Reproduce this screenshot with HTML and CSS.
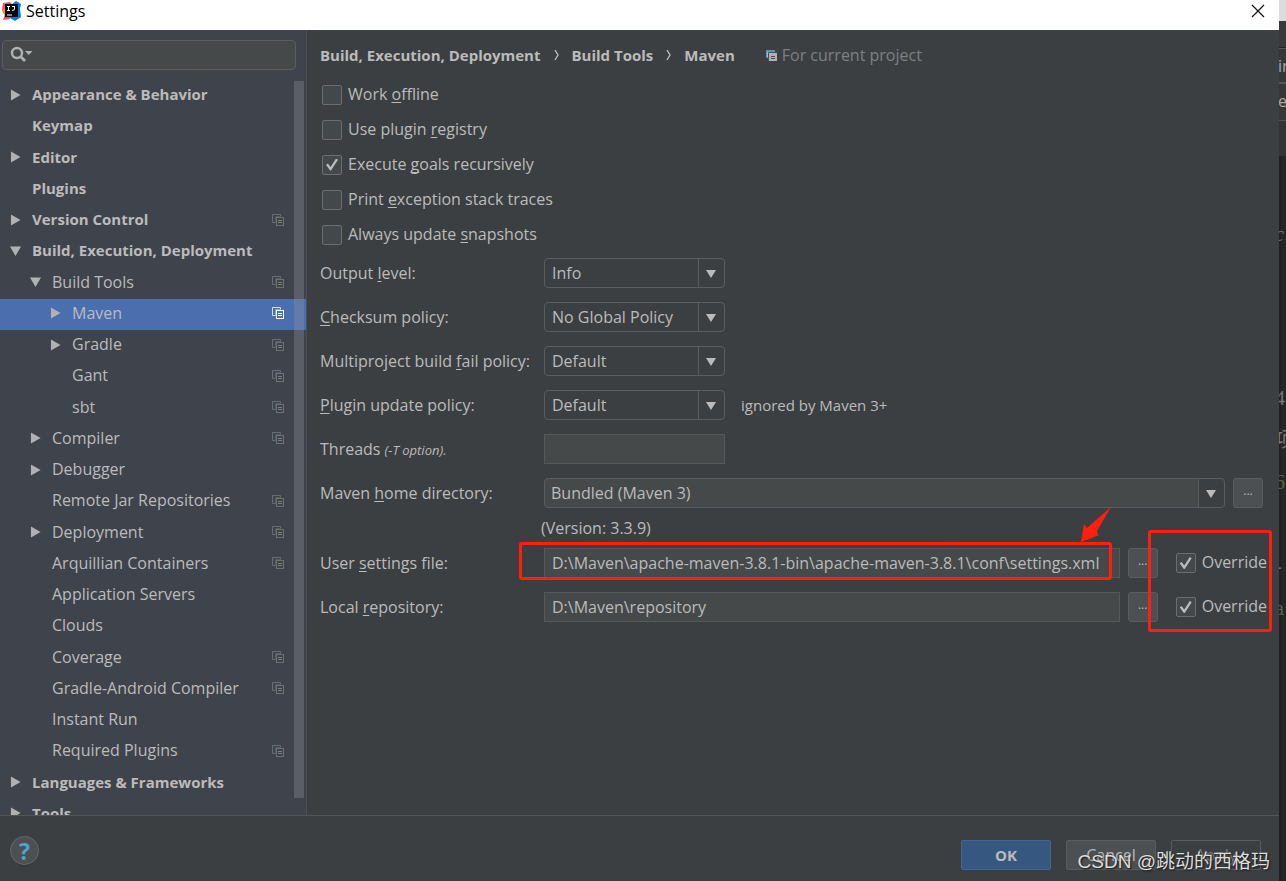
FILE: index.html
```html
<!DOCTYPE html>
<html lang="en">
<head>
<meta charset="utf-8">
<title>Settings</title>
<link rel="stylesheet" href="styles.css">
</head>
<body>
<svg class="defs" width="0" height="0" aria-hidden="true">
  <symbol id="right" viewBox="0 0 12 12"><path d="M1 0L11.500 6L1 12Z" fill="currentColor"/></symbol>
  <symbol id="down" viewBox="0 0 12 12"><path d="M0 1H12L6 11.500Z" fill="currentColor"/></symbol>
  <symbol id="pick" viewBox="0 0 10 8"><path d="M0 0H10L5 8Z" fill="currentColor"/></symbol>
  <symbol id="copy" viewBox="0 0 12 12"><path d="M3 8.500H.5V.5H8.500V2" fill="none" stroke="#626e79"/><path d="M3.500 9V2.500H9" fill="none" stroke="#565b60"/><rect x="4.500" y="3.500" width="7" height="8" fill="none" stroke="#6d7174"/><path d="M6 6.500h4M6 8.500h4" stroke="#7a7e81"/></symbol>
  <symbol id="copy-on" viewBox="0 0 12 12"><path d="M3 8.500H.5V.5H8.500V2" fill="none" stroke="#c9e4ff"/><rect x="4.500" y="3.500" width="7" height="8" fill="none" stroke="#fff"/><path d="M3.500 9V2.500H9" fill="none" stroke="#8fa9d6"/><path d="M6 6.500h4M6 8.500h4" stroke="#fff"/></symbol>
</svg>
<div class="desktop">
<div class="dialog">
  <header class="titlebar">
    <svg class="logo" width="19" height="20" viewBox="0 0 19 20"><path d="M1 2L8 1L11 4L8 18L1 19L3 13L0 9Z" fill="#f0506a"/><path d="M0 9L4 7V15L1 12Z" fill="#f58a3c"/><path d="M10 3L14 0L19 3L18 8L19 16L13 20L8 17Z" fill="#0a78dc"/><rect x="3" y="3" width="13" height="13" fill="#0b0b0f"/><path d="M5 5.500h3M6.500 5.500v4M5 9.500h3M10 5.500h3M12.500 5v3q0 1.500-2.500 1.500M5 14h5" fill="none" stroke="#fff"/></svg>
    <h1>Settings</h1>
    <button class="close" aria-label="Close"><svg width="14" height="14" viewBox="0 0 14 14"><path d="M1 1L13 13M13 1L1 13" stroke="#111" stroke-width="1.200"/></svg></button>
  </header>
  <div class="content">
    <aside class="sidebar">
      <label class="search" aria-label="Search settings">
        <svg width="24" height="18" viewBox="0 0 24 18"><circle cx="7" cy="7" r="5" fill="none" stroke="#afb1b3" stroke-width="2.400"/><path d="M10.500 10.500L15 15" stroke="#afb1b3" stroke-width="2.800"/><path d="M15 5H22.500L18.700 9Z" fill="#afb1b3"/></svg>
        <input type="text">
      </label>
      <div class="tree-view">
      <ul class="tree">
        <li class="top"><svg class="arrow"><use href="#right"/></svg><span>Appearance &amp; Behavior</span></li>
        <li class="top"><i class="arrow"></i><span>Keymap</span></li>
        <li class="top"><svg class="arrow"><use href="#right"/></svg><span>Editor</span></li>
        <li class="top"><i class="arrow"></i><span>Plugins</span></li>
        <li class="top"><svg class="arrow"><use href="#right"/></svg><span>Version Control</span><svg class="copy"><use href="#copy"/></svg></li>
        <li class="top"><svg class="arrow"><use href="#down"/></svg><span>Build, Execution, Deployment</span></li>
        <li class="sub"><svg class="arrow"><use href="#down"/></svg><span>Build Tools</span><svg class="copy"><use href="#copy"/></svg></li>
        <li class="leaf selected"><svg class="arrow"><use href="#right"/></svg><span>Maven</span><svg class="copy"><use href="#copy-on"/></svg></li>
        <li class="leaf"><svg class="arrow"><use href="#right"/></svg><span>Gradle</span><svg class="copy"><use href="#copy"/></svg></li>
        <li class="leaf"><i class="arrow"></i><span>Gant</span><svg class="copy"><use href="#copy"/></svg></li>
        <li class="leaf"><i class="arrow"></i><span>sbt</span><svg class="copy"><use href="#copy"/></svg></li>
        <li class="sub"><svg class="arrow"><use href="#right"/></svg><span>Compiler</span><svg class="copy"><use href="#copy"/></svg></li>
        <li class="sub"><svg class="arrow"><use href="#right"/></svg><span>Debugger</span></li>
        <li class="sub"><i class="arrow"></i><span>Remote Jar Repositories</span><svg class="copy"><use href="#copy"/></svg></li>
        <li class="sub"><svg class="arrow"><use href="#right"/></svg><span>Deployment</span><svg class="copy"><use href="#copy"/></svg></li>
        <li class="sub"><i class="arrow"></i><span>Arquillian Containers</span><svg class="copy"><use href="#copy"/></svg></li>
        <li class="sub"><i class="arrow"></i><span>Application Servers</span></li>
        <li class="sub"><i class="arrow"></i><span>Clouds</span></li>
        <li class="sub"><i class="arrow"></i><span>Coverage</span><svg class="copy"><use href="#copy"/></svg></li>
        <li class="sub"><i class="arrow"></i><span>Gradle-Android Compiler</span><svg class="copy"><use href="#copy"/></svg></li>
        <li class="sub"><i class="arrow"></i><span>Instant Run</span></li>
        <li class="sub"><i class="arrow"></i><span>Required Plugins</span><svg class="copy"><use href="#copy"/></svg></li>
        <li class="top"><svg class="arrow"><use href="#right"/></svg><span>Languages &amp; Frameworks</span></li>
        <li class="top"><svg class="arrow"><use href="#right"/></svg><span>Tools</span></li>
      </ul>
      <div class="thumb"></div>
      </div>
    </aside>
    <main class="main">
      <nav class="crumbs">
        <b>Build, Execution, Deployment</b><svg width="5" height="12" viewBox="0 0 5 12"><path d="M1 1L4 6L1 11" fill="none" stroke="#bbb" stroke-width="1.400"/></svg><b>Build Tools</b><svg width="5" height="12" viewBox="0 0 5 12"><path d="M1 1L4 6L1 11" fill="none" stroke="#bbb" stroke-width="1.400"/></svg><b>Maven</b>
        <span class="scope"><svg width="11" height="11" viewBox="0 0 11 11"><path d="M0 0H9V2H3V8H0Z" fill="#5e94b5"/><path d="M1 2H8V7H1Z" fill="#aeb9c0"/><path d="M3 3H11V11H3Z" fill="#afb1b3"/><path d="M2.500 11V2.500H11" fill="none" stroke="#4a5155"/><path d="M5 6.500h4M5 8.500h4" stroke="#4a4d4f"/></svg>For current project</span>
      </nav>
      <div class="checks">
        <label class="check"><input type="checkbox"><span>Work <u>o</u>ffline</span></label>
        <label class="check"><input type="checkbox"><span>Use plugin <u>r</u>egistry</span></label>
        <label class="check"><input type="checkbox" checked><span>Execute <u>g</u>oals recursively</span></label>
        <label class="check"><input type="checkbox"><span>Print <u>e</u>xception stack traces</span></label>
        <label class="check"><input type="checkbox"><span>Always update <u>s</u>napshots</span></label>
      </div>
      <form class="form">
        <div class="row"><label for="level">Output <u>l</u>evel:</label><div class="combo"><select id="level"><option>Info</option></select><svg class="pick"><use href="#pick"/></svg></div></div>
        <div class="row"><label for="sum"><u>C</u>hecksum policy:</label><div class="combo"><select id="sum"><option>No Global Policy</option></select><svg class="pick"><use href="#pick"/></svg></div></div>
        <div class="row"><label for="fail">Multiproject build <u>f</u>ail policy:</label><div class="combo"><select id="fail"><option>Default</option></select><svg class="pick"><use href="#pick"/></svg></div></div>
        <div class="row"><label for="upd"><u>P</u>lugin update policy:</label><div class="combo"><select id="upd"><option>Default</option></select><svg class="pick"><use href="#pick"/></svg></div><span class="note">ignored by Maven 3+</span></div>
        <div class="row"><label for="threads">Threads <i>(-T option).</i></label><input class="text short" id="threads" type="text"></div>
        <div class="row home"><label for="home">Maven <u>h</u>ome directory:</label><div class="combo wide"><select id="home"><option>Bundled (Maven 3)</option></select><svg class="pick"><use href="#pick"/></svg></div><button type="button" class="more" aria-label="Browse home">...</button></div>
        <p class="version">(Version: 3.3.9)</p>
        <div class="row marked"><label for="user">User <u>s</u>ettings file:</label><input class="text" id="user" type="text" value="D:\Maven\apache-maven-3.8.1-bin\apache-maven-3.8.1\conf\settings.xml"><button type="button" class="more" aria-label="Browse settings">...</button><label class="check override"><input type="checkbox" checked><span>Override</span></label>
          <div class="mark file"></div><div class="mark toggles"></div>
          <svg class="pointer" width="32" height="36" viewBox="0 0 32 36"><path d="M31 0L17 24L18 27L19 28L1 35L4 17L7 21Z" fill="#ff1f0f"/></svg>
        </div>
        <div class="row"><label for="repo">Local <u>r</u>epository:</label><input class="text" id="repo" type="text" value="D:\Maven\repository"><button type="button" class="more" aria-label="Browse repository">...</button><label class="check override"><input type="checkbox" checked><span>Override</span></label></div>
      </form>
    </main>
  </div>
  <footer class="footer">
    <button class="help">?</button>
    <button class="btn ok">OK</button>
    <button class="btn">Cancel</button>
    <button class="btn apply" disabled>Apply</button>
  </footer>
</div>
<div class="editor" aria-hidden="true">
  <div class="sky"></div><div class="menu"></div><div class="tab">in</div><div class="tab file-tab">e</div><div class="bar"></div>
  <div class="code ital">c</div><div class="gap"></div><div class="code">4</div><div class="code">项</div><div class="code green">6</div><div class="code"></div><div class="code">-</div><div class="code green">a</div>
</div>
<div class="watermark">CSDN @跳动的西格玛</div>
</div>
</body>
</html>
```
FILE: styles.css
```css
* { box-sizing: border-box; }
body { margin: 0; background: #262626; color: #bbb; font: 16px/20px "Open Sans", "Noto Sans", sans-serif; }
button, input, select { font: inherit; color: inherit; }
h1, p, ul { margin: 0; padding: 0; }
.defs { position: absolute; }
.desktop { position: relative; display: flex; height: 100vh; overflow: hidden; }
.dialog { flex: 1; min-width: 0; display: flex; flex-direction: column; background: #3c3f41; }

.titlebar { display: flex; align-items: center; height: 30px; padding: 0 14px 8px 2px; gap: 5px; background: #fff; color: #000; flex: none; }
.titlebar h1 { flex: 1; font-size: 16px; font-weight: 400; }
.close { display: flex; padding: 0; border: 0; background: none; }

.content { flex: 1; min-height: 0; display: flex; border-bottom: 1px solid #515658; }
.sidebar { width: 307px; flex: none; display: flex; flex-direction: column; background: #3f434c; border-right: 1px solid #4d5052; }
.search { display: flex; align-items: center; height: 30px; margin: 10px 10px 10px 2px; padding-left: 7px; border: 1px solid #5a5e5f; border-radius: 4px; background: #45494a; }
.search input { flex: 1; min-width: 0; border: 0; background: none; outline: 0; }
.tree-view { position: relative; flex: 1; min-height: 0; overflow: hidden; }
.tree { display: grid; grid-auto-rows: 1fr; height: 750px; list-style: none; }
.tree li { display: flex; align-items: center; gap: 11px; padding: 0 22px 2px 10px; }
.tree .top, .crumbs b { font-size: 15px; font-weight: 700; }
.tree .sub { padding-left: 30px; }
.tree .leaf { padding-left: 50px; }
.tree span { flex: 1; padding-bottom: 1px; }
.tree .selected { background: #4b6eaf; }
.arrow { width: 11px; height: 12px; flex: none; color: #afb1b3; }
.copy { width: 12px; height: 12px; flex: none; }
.thumb { position: absolute; top: 1px; right: 2px; bottom: 17px; width: 10px; background: rgba(150, 152, 160, .32); }

.main { flex: 1; min-width: 0; padding: 15px 12px 0 13px; }
.crumbs { display: flex; align-items: center; gap: 13px; height: 20px; }
.scope { display: flex; align-items: center; gap: 5px; margin-left: 18px; color: #7d8082; }
.checks { margin: 12px 0 0 2px; }
.check { display: flex; align-items: center; gap: 6px; height: 35px; white-space: nowrap; }
.check span { padding-bottom: 2px; }
.check input { appearance: none; width: 20px; height: 20px; margin: 0; border: 1px solid #6b6e70; border-radius: 2px; background: #43494a; display: grid; place-items: center; }
.check input:checked::after { content: ""; width: 12px; height: 12px; background: #bbb; clip-path: polygon(0 52%, 16% 42%, 38% 70%, 84% 0, 100% 10%, 42% 100%, 34% 100%); }
u { text-decoration: underline; text-decoration-skip-ink: none; text-underline-offset: 2px; }

.form { display: flex; flex-direction: column; gap: 14px; margin-top: 6px; }
.row { display: flex; align-items: center; height: 30px; }
.row > label:first-child { width: 224px; flex: none; white-space: nowrap; }
.row i { font-size: 13px; }
.combo { position: relative; width: 181px; height: 30px; }
.combo select { appearance: none; width: 100%; height: 100%; padding: 0 34px 0 7px; border: 1px solid #5a5d5e; border-radius: 4px; background: linear-gradient(#5a5d5e, #5a5d5e) right 25px top / 1px 100% no-repeat; outline: 0; }
.pick { position: absolute; right: 9px; top: 12px; width: 10px; height: 8px; color: #bbb; pointer-events: none; }
.combo.wide { flex: 1; }
.combo.wide select { padding-left: 6px; background-image: linear-gradient(90deg, #5a5d5e 1px, #3c3f41 1px), linear-gradient(#45494a, #45494a); background-size: 26px 100%, 100% 100%; background-position: right top; }
.note { margin-left: 16px; font-size: 15px; }
.text { flex: 1; min-width: 0; height: 30px; padding: 0 7px; border: 1px solid #56595a; background: #45494a; outline: 0; }
.text.short { flex: none; width: 181px; }
.more { width: 30px; height: 30px; margin-left: 8px; padding: 0 0 5px; border: 1px solid #595d5f; border-radius: 3px; background: #4c5052; font-size: 12px; line-height: 20px; }
.home { padding-right: 4px; }
.version { margin: -7px 0 -7px 221px; height: 26px; line-height: 26px; }
.override { margin-left: 18px; }
.marked { position: relative; }
.mark { position: absolute; border: 3px solid #ff1f0f; border-radius: 3px; pointer-events: none; }
.file { left: 199px; right: 155px; top: -6px; height: 38px; }
.toggles { width: 124px; right: -5px; top: -18px; height: 102px; }
.pointer { position: absolute; right: 155px; top: -41px; }

.footer { display: flex; align-items: center; gap: 15px; height: 65px; padding: 0 18px 0 10px; flex: none; }
.help { width: 29px; height: 29px; margin: 4px auto 0 0; padding: 0; border: 1px solid #66696b; border-radius: 50%; background: #4c5052; color: #52a1cf; font-size: 23px; font-weight: 700; line-height: 26px; box-shadow: 0 7px 0 -5px #35383a; }
.btn { width: 90px; height: 30px; margin-top: 12px; padding: 0; border: 1px solid #585c5e; border-radius: 2px; background: #4c5052; }
.btn.ok { border-color: #43688f; background: #365880; font-size: 15px; font-weight: 700; }
.btn.apply { background: none; color: #777; }

.editor { width: 7px; flex: none; overflow: hidden; background: #262626; box-shadow: inset 2px 0 2px #202020; color: #777; line-height: 35px; }
.sky { height: 21px; background: #dcdcdc; }
.menu { height: 27px; background: #393939; border-bottom: 1px solid #222; }
.tab { height: 35px; background: #373737; border-bottom: 1px solid #555; border-top: 1px solid #555; color: #aaa; text-indent: -1px; }
.file-tab { height: 38px; }
.bar { height: 35px; background: #343434; }
.code { height: 42px; font-size: 20px; line-height: 42px; text-indent: -4px; font-family: "Liberation Serif", "Noto Sans CJK SC", serif; }
.ital { height: 156px; line-height: 156px; font-style: italic; }
.gap { height: 65px; }
.green { color: #52684b; }
.watermark { position: absolute; right: 16px; bottom: 5px; color: #ddd; font: 19px/28px "Liberation Sans", "Noto Sans CJK SC", sans-serif; text-shadow: 1px 1px 2px #111; white-space: nowrap; }
```
